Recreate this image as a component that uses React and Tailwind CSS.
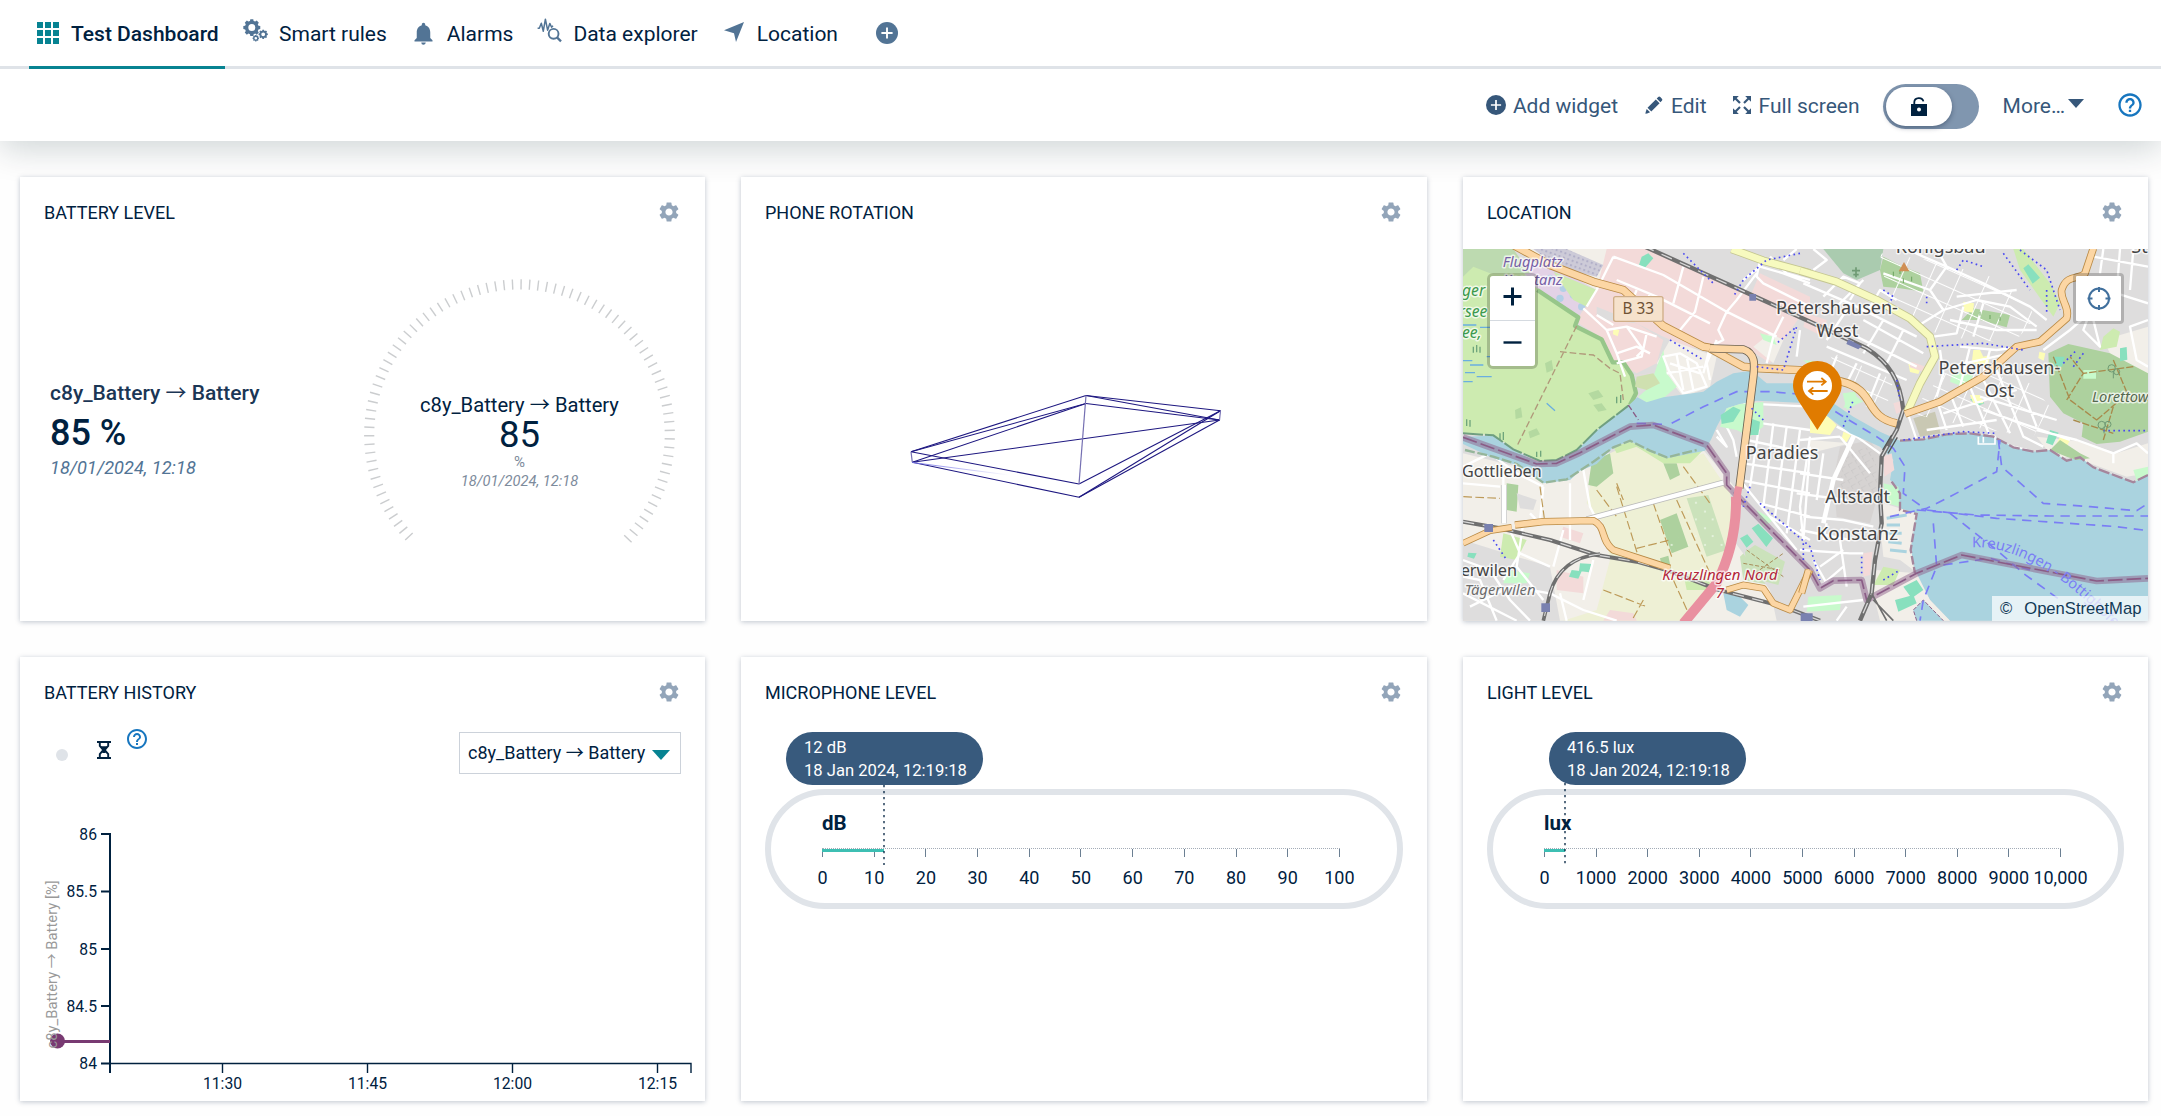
import React from 'react';
import { MdSettings, MdNotifications, MdHelpOutline } from 'react-icons/md';

const ARROW_FONT = '"Noto Sans CJK JP", "Noto Sans CJK SC", sans-serif';

const polar = (cx, cy, r, deg) => {
  const a = (deg * Math.PI) / 180;
  return [cx + r * Math.sin(a), cy - r * Math.cos(a)];
};

function gearPath(cx, cy, outer, inner, hole, teeth) {
  const step = 360 / teeth;
  const pts = [];
  for (let i = 0; i < teeth; i++) {
    const a = i * step;
    pts.push(polar(cx, cy, inner, a - step * 0.34));
    pts.push(polar(cx, cy, outer, a - step * 0.22));
    pts.push(polar(cx, cy, outer, a + step * 0.22));
    pts.push(polar(cx, cy, inner, a + step * 0.34));
  }
  const body = 'M' + pts.map((p) => p[0].toFixed(2) + ' ' + p[1].toFixed(2)).join('L') + 'Z';
  return `${body}M${cx - hole} ${cy}a${hole} ${hole} 0 1 0 ${hole * 2} 0a${hole} ${hole} 0 1 0 ${-hole * 2} 0Z`;
}

const Arrow = () => <span className="font-normal" style={{ fontFamily: ARROW_FONT, lineHeight: 0 }}>→</span>;

const GridIcon = () => (
  <svg width="22" height="22" viewBox="0 0 22 22" fill="#078392">
    {[0, 8, 16].map((y) => [0, 8, 16].map((x) => <rect key={`${x}-${y}`} x={x} y={y} width="6" height="6" />))}
  </svg>
);

const CogsIcon = () => (
  <svg width="25" height="23" viewBox="0 0 25 23" fill="#527495" fillRule="evenodd">
    <path d={gearPath(8.8, 8.6, 8.6, 6.9, 3.5, 8)} />
    <path d={gearPath(20.2, 15.3, 4.7, 3.8, 1.9, 8)} />
    <path d={gearPath(12.8, 19.2, 3.3, 2.7, 1.3, 8)} />
  </svg>
);

const ExplorerIcon = () => (
  <svg width="25" height="25" viewBox="0 0 25 25" fill="none" stroke="#527495">
    <path d="M.6 10.2H2.3L4.3 5.2L6.3 13.2L8.4 1.2L10.6 12.2L12.8 5.4L14.6 9.2L16 7.8" strokeWidth="1.5" strokeLinejoin="round" />
    <circle cx="16.6" cy="15.8" r="4.9" strokeWidth="1.9" />
    <path d="M20 19.4L24 23.4" strokeWidth="2.3" />
  </svg>
);

const PlusCircle = ({ size, color }) => (
  <svg width={size} height={size} viewBox="0 0 22 22">
    <circle cx="11" cy="11" r="11" fill={color} />
    <path d="M11 5.4V16.6M5.4 11H16.6" stroke="#fff" strokeWidth="1.9" />
  </svg>
);

const PencilIcon = () => (
  <svg width="18" height="18" viewBox="0 0 18 18" fill="#36577a">
    <path d="M13.2 1.1a1.5 1.5 0 0 1 2.1 0l1.6 1.6a1.5 1.5 0 0 1 0 2.1l-1.5 1.5-3.7-3.7zM10.8 3.4l3.8 3.8-8.3 8.3-3.8-3.8zM1.7 12.9l3.4 3.4-3 1.1L.4 17.7l.3-1.8z" />
  </svg>
);

const ExpandIcon = () => (
  <svg width="18" height="18" viewBox="0 0 18 18" fill="#36577a" stroke="#36577a">
    {[0, 90, 180, 270].map((r) => (
      <g key={r} transform={`rotate(${r} 9 9)`}>
        <path d="M0 0H5.8L0 5.8Z" stroke="none" />
        <path d="M2 2L7 7" strokeWidth="2.2" />
      </g>
    ))}
  </svg>
);

const UnlockIcon = () => (
  <svg width="16" height="19" viewBox="0 0 16 19">
    <path d="M3.3 8V5A4.6 4.2 0 0 1 12.4 4.4" fill="none" stroke="#00213f" strokeWidth="1.8" />
    <path fillRule="evenodd" fill="#00213f" d="M0 7H16V19H0ZM6 12.6a2 2 0 1 0 4 0a2 2 0 1 0-4 0Z" />
  </svg>
);

const Hourglass = () => (
  <svg width="14" height="18" viewBox="0 0 14 18" fill="none" stroke="#00213f">
    <path d="M0 1H14M0 17H14" strokeWidth="2" />
    <path d="M2.8 1.5V4.8L6.2 9 2.8 13.2V16.5M11.2 1.5V4.8L7.8 9 11.2 13.2V16.5" strokeWidth="1.9" />
    <path d="M3.5 5.2H10.5L7.6 9.2 9 12H5L6.4 9.2Z" fill="#00213f" stroke="none" />
  </svg>
);

function Tab({ icon, label, className = '', active }) {
  return (
    <div
      className={
        (active ? 'font-medium border-[#078392] ' : 'border-[#dfe3e8] ') +
        'flex h-[69px] items-center border-b-[3px] text-[21px] leading-none text-[#00213f] ' +
        className
      }
    >
      {icon}
      <span className="mt-[2px] whitespace-nowrap">{label}</span>
    </div>
  );
}

function Card({ title, children }) {
  return (
    <section className="relative flex h-[444px] flex-col bg-white shadow-[0_1px_5px_rgba(10,35,70,0.26)]">
      <header className="flex h-[72px] shrink-0 items-center justify-between pr-[24px] pl-[24px]">
        <h2 className="text-[18px] leading-none text-[#00213f]">{title}</h2>
        <MdSettings size={24} color="#93a5b9" className="-mt-[3px]" />
      </header>
      <div className="relative flex flex-1">{children}</div>
    </section>
  );
}

function BatteryLevel() {
  const ticks = [];
  for (let i = -41; i <= 41; i++) {
    const a = i * 3.25 + 0.6;
    ticks.push([...polar(499.5, 185.7, 155.4, a), ...polar(499.5, 185.7, 145.2, a)]);
  }
  return (
    <>
      <div className="mt-[132px] flex w-[300px] flex-col pl-[30px]">
        <div className="text-[21px] leading-[24px] font-medium whitespace-nowrap text-[#1b3655]">c8y_Battery <Arrow /> Battery</div>
        <div className="mt-[7px] text-[36px] leading-[42px] font-medium text-[#00213f]">85 %</div>
        <div className="mt-[2px] text-[18.2px] leading-[24px] text-[#527495] italic">18/01/2024, 12:18</div>
      </div>
      <svg className="absolute inset-0" width="685" height="372">
        {ticks.map((t, i) => (
          <line key={i} x1={t[0]} y1={t[1]} x2={t[2]} y2={t[3]} stroke="#cbcdcf" strokeWidth="1.4" />
        ))}
        <g textAnchor="middle" fill="#00213f">
          <text x="499.5" y="163" fontSize="20.2">c8y_Battery <tspan fontFamily={ARROW_FONT}>→</tspan> Battery</text>
          <text x="499.5" y="197.5" fontSize="36.5">85</text>
          <text x="499.5" y="217.5" fontSize="15" fill="#7d8b9c">%</text>
          <text x="499.5" y="237" fontSize="14.7" fill="#7d8b9c" fontStyle="italic">18/01/2024, 12:18</text>
        </g>
      </svg>
    </>
  );
}

function PhoneRotation() {
  const P = {
    a: [345, 146.5], a2: [345, 154.5], b: [479.5, 161.7], b2: [478.5, 171],
    c: [170, 202.7], c2: [171.3, 213.3], d: [338, 235], d2: [338, 248.3],
  };
  const edges = ['a-b', 'a-c', 'a2-c', 'a2-c2', 'a2-b2', 'a-b2', 'c-d', 'c2-d2', 'd-b', 'd2-b', 'd2-b2', 'c2-b2'];
  const soft = ['a-d', 'b-b2', 'c-c2'];
  const line = (e, stroke, w = 1) => {
    const [s, t] = e.split('-');
    return <line key={e} x1={P[s][0]} y1={P[s][1]} x2={P[t][0]} y2={P[t][1]} stroke={stroke} strokeWidth={w} />;
  };
  return (
    <svg width="685" height="372">
      <defs>
        <linearGradient id="fade" x1="0" x2="1">
          <stop offset="0" stopColor="#7a78e8" />
          <stop offset="1" stopColor="#7a78e8" stopOpacity="0" />
        </linearGradient>
      </defs>
      {edges.map((e) => line(e, '#1d1780', 1.1))}
      {soft.map((e) => line(e, '#7570b2', 1.2))}
      <path d="M171.3 213.5L268 226" stroke="url(#fade)" fill="none" />
    </svg>
  );
}

/* ---------- Map ---------- */
const COL = {
  water: '#aad3df', land: '#f2efe9', res: '#dedddd', ind: '#f3dad9', grass: '#cdebb0',
  field: '#eef0d5', forest: '#add19e', park: '#c8facc', pitch: '#88e0be', yellow: '#fdfdb6',
  rail: '#6f6f6f', admin: '#8d618b',
};

const Fill = ({ d, c }) => <path d={d} fill={c} />;

const Road = ({ d, w = 20, c = '#fcd6a4', e = '#b98a45' }) => (
  <g fill="none" strokeLinejoin="round">
    <path d={d} stroke={e} strokeWidth={w + 5} />
    <path d={d} stroke={c} strokeWidth={w} />
  </g>
);

const Rail = ({ d, w = 10 }) => (
  <g fill="none" strokeLinejoin="round">
    <path d={d} stroke={COL.rail} strokeWidth={w} />
    <path d={d} stroke="#d9d9d9" strokeWidth={w * 0.3} strokeDasharray="34 26" />
  </g>
);

const Label = ({ x, y, s = 50, c = '#444', children, ...rest }) => (
  <text x={x} y={y} fontSize={s} fill={c} stroke="#fff" strokeOpacity="0.7" strokeWidth="9" strokeLinejoin="round" paintOrder="stroke" {...rest}>
    {children}
  </text>
);

const MINOR_LEFT =
  'M490 50L440 150 410 200 M490 50L640 105 830 215 980 290 M500 120L620 170 780 250 M700 80L670 190 M760 110L735 215 690 270 M830 215L805 270 820 300 780 320 760 400 M600 160L580 215 M560 150L540 200 M920 100L860 180 830 215 M880 120L930 80 1000 100 1080 130 M400 205L470 270 530 260 620 290 M470 270L500 340 525 410 M530 260L580 330 560 350 M500 340L560 320 600 340 M440 225L490 255 M590 280L575 350 500 370 M640 350L690 340 740 370 770 440 700 460 660 400Z M660 370L750 400 M680 345L700 450 M710 350L730 450 M650 400L760 380 M930 60L920 110 940 130 1080 200 M960 50L1010 100 1080 120 M1000 60L1040 27 M780 420L770 370 800 300 M1000 230L970 290 950 370 M1050 270L1040 350';
const MINOR_PARADIES =
  'M880 490L1080 500 M900 545L1080 570 M890 600L1080 640 M880 670L1080 700 M870 720L1080 760 M930 540L900 740 M970 550L940 800 M1010 560L975 830 M1050 570L1010 880 M870 720L1040 930 M930 790L1080 830 M960 830L1080 900 M800 570L830 620 800 590 M830 560L850 600 860 650 M1080 590L1050 800 1060 900';
const MINOR_SW =
  'M39 680L120 640 200 700 280 740 M160 700V850 M240 820L270 850 M400 690L420 800 440 840 M280 740L270 840 M360 730L360 900 M39 960L120 990 180 1080 240 1142 M39 1010L90 1020 140 1142 M180 870L210 940 300 980 M210 940L160 1020 M60 1100L180 1040 300 1060 400 1110 500 1142 M330 1060L350 1142 M430 960L400 1080 M39 730L150 740 M340 870L310 980 M220 850L200 980 280 1080 M39 1060L200 1142';
const MINOR_RIGHT =
  'M1060 130L1200 190 1320 250 1400 290 M1090 90L1130 60 1090 27 M1120 170L1180 110 1230 130 1200 180 M1160 200L1240 120 M1250 220L1290 150 1340 180 M1240 240L1330 290 1420 340 M1200 280L1400 380 M1190 210L1130 300 M1300 240L1240 340 M1360 270L1310 370 M1130 320L1370 420 M1160 350L1140 400 M1220 370L1190 430 M1290 400L1250 500 M1300 100L1440 150 1490 80 1420 50 1370 27 M1440 150L1480 210 1400 260 M1490 80L1600 130 1740 200 1790 240 M1490 80L1460 27 M1480 210L1580 180 1680 200 1760 260 M1520 170L1700 150 M1540 200L1520 280 1450 290 M1500 240L1640 270 1760 270 M1600 190L1570 290 M1470 330L1480 400 1460 470 M1530 320L1640 330 1720 320 M1560 320L1530 440 M1620 330L1600 400 M1500 380L1680 340 M1370 510L1400 600 M1460 480L1490 570 M1500 460L1540 560 M1560 440L1620 590 M1430 570L1640 540 M1480 520L1700 450 M1600 420L1680 580 M1640 390L1720 590 1780 620 M1690 380L1760 560 M1560 590L1730 630 M1590 470L1820 540 M1600 510L1860 600 M1780 330L1860 270 1940 200 1980 120 M1960 110L1930 190 1900 270 1950 320 1930 240 1960 210 M2010 27L2000 160 2094 190 M2050 27L2040 150 M1930 50L2094 80 M1960 27L1950 100 M2094 240L2040 260 2060 360 2094 380 M1760 570L1880 600 1990 640 2060 610 2094 640 M1990 640L1990 670';
const MINOR_CITY =
  'M1050 700L1180 720 M1040 760L1190 780 M1080 620L1060 900 M1120 640L1100 780 M1170 590L1260 700 M1160 560L1220 590 1290 640 M1050 600L1170 590 M1060 830L1180 840 1270 860 M1050 930L1200 940 1240 940 M1090 960L1130 1030 M1170 900L1190 1040 M1130 850L1120 900 M1050 870L1200 900 M1060 1100L1240 1080 M1180 930L1110 980 M1190 1100L1160 1142 M1110 1040L1180 980';
const DOTS =
  'M1050 40L950 60 880 120 850 170 M920 380L1000 390 1040 260 980 310 M700 40L790 130 M660 300L760 360 M1660 40L1740 150 M1710 30L1790 90 1830 210 M1790 150L1790 220 M1360 600L1540 575 1640 580 M1300 150L1330 170 1310 200 M1430 320L1600 310 1720 330 M1430 190V160 M1520 90L1540 60 1600 80 M1900 340L1870 380 M1960 572H2094 M1180 560L1210 480 M1235 950V1010 M1300 1020L1350 990 M930 790L1080 920 1110 1020 M900 740L880 800 M940 540L900 500 M130 900L170 960 M1060 910V960 M1340 420L1350 480 M1840 370L1880 330';
const BORDER =
  'M39 592L260 672 320 670 390 638 540 560 610 555 770 615 830 700 830 735 1080 990 1110 1045 1150 1022 1235 1020 1250 1080 1400 1000 1535 945 1940 1023 2094 1015';

function MapCanvas() {
  return (
    <svg className="block h-[372px] w-full" viewBox="39 27 2055 1116" preserveAspectRatio="none" fontFamily="'Noto Sans', sans-serif">
      <defs>
        <pattern id="blocks" width="80" height="48" patternUnits="userSpaceOnUse" patternTransform="rotate(24)">
          <path d="M0 0H80M0 0V48" stroke="#fff" strokeWidth="6" fill="none" />
        </pattern>
        <pattern id="oldtown" width="24" height="20" patternUnits="userSpaceOnUse" patternTransform="rotate(-30)">
          <path d="M0 0H16M0 0V12" stroke="#c5c3c3" strokeWidth="3" fill="none" />
        </pattern>
        <pattern id="orchard" width="50" height="50" patternUnits="userSpaceOnUse">
          <circle cx="15" cy="15" r="3" fill="#eaf6e4" />
          <circle cx="38" cy="38" r="3" fill="#eaf6e4" />
        </pattern>
        <pattern id="hatch" width="14" height="14" patternUnits="userSpaceOnUse" patternTransform="rotate(20)">
          <rect width="14" height="14" fill="#cdcbd8" />
          <rect width="6" height="6" fill="#b1afc8" />
        </pattern>
        <path id="ferryname" d="M1566 922C1640 918 1730 950 1810 1005S1950 1120 2000 1170" />
      </defs>
      <rect x="39" y="27" width="2055" height="1116" fill={COL.res} />

      {/* open land and industry */}
      <Fill c={COL.land} d="M39 640L280 700 470 640 760 630 870 760 1000 980 1080 1142H39Z" />
      <Fill c={COL.land} d="M230 27H520L440 150 350 100Z" />
      <Fill c={COL.ind} d="M470 27H600L900 160 1050 230 1000 300 960 370 900 330 760 320 640 330 600 400 540 410 490 365 455 295 380 240 440 150Z" />
      <Fill c={COL.res} d="M440 200L540 240 640 290 760 340 780 430 700 470 600 400 530 410 480 340 440 280Z" />
      <Fill c={COL.ind} d="M410 210L470 240 560 250 640 300 620 370 560 400 500 370 450 290 385 250Z" />
      <Fill c={COL.land} d="M660 300L800 350 780 440 700 470 620 370Z" />
      <Fill c={COL.ind} d="M930 100L1080 170 1080 240 900 170Z" />
      <Fill c={COL.land} d="M960 280L1000 300 970 370 910 320Z" />
      <Fill c="url(#hatch)" d="M250 27H350L460 75 440 110 330 85Z" />
      <Fill c="#e3d2e6" d="M200 60L330 90 420 140 390 225 260 150Z" />
      {[[300, 115], [340, 145], [370, 165], [395, 200], [330, 175]].map((p, i) => (
        <circle key={i} cx={p[0]} cy={p[1]} r="11" fill="#b3cfe6" />
      ))}
      <Fill c={COL.grass} d="M310 95L440 150 410 200 370 180Z" />

      {/* wetland */}
      <Fill c={COL.grass} d="M39 27H180L240 130 385 230 375 258 455 298 488 367 520 367 545 405 560 460 540 497 500 530 440 570 380 630 310 665 260 660 190 625 130 585 39 580Z" />
      <Fill c="#bddab0" d="M39 27H190L240 100 120 100 70 80 39 110Z" />
      <path d="M262 150L385 232 375 258 455 298 488 367 520 367 545 405 558 460 540 495" fill="none" stroke="#97c68a" strokeWidth="13" strokeLinejoin="round" />
      <path d="M380 258L200 620 M330 335L430 345 480 385 510 400 520 480" fill="none" stroke="#b0987a" strokeWidth="4" strokeDasharray="20 9" />
      <path d="M39 255h40M90 262h30M39 362h28M60 375h40M45 398h30M80 410h45M40 425h28M110 350h30M290 490l25 22" stroke="#6aaee0" strokeWidth="4" />
      <Fill c="#b4d9a0" d="M415 460l30-10 15 20-30 10zM430 495l25-5 15 20-25 5zM195 510l18-8 4 30-20 5zM235 575l25-10 10 18-30 12zM285 370l20-10 5 30-20 8z" />
      <path d="M70 320v18M80 315v22M90 320v18M60 540v20M50 538v20M150 580v22M160 576v24M260 635v16M272 632v18M500 470v20M512 465v24" stroke="#6fa57c" strokeWidth="4" />

      {/* parks, woods, pitches */}
      <Fill c={COL.park} d="M640 330L650 400 680 440 640 475 590 488 565 470 600 440 620 380Z" />
      <Fill c="#cfe0b0" d="M560 410L610 400 630 430 590 450 555 440Z" />
      <Fill c="#aacbaf" d="M1120 27H1300L1290 90 1220 120 1180 100Z" />
      <Fill c={COL.forest} d="M1300 50L1360 80 1410 100 1420 155 1350 145 1300 140 1290 90Z" />
      <Fill c={COL.grass} d="M1690 27H1720L1800 130 1830 190 1810 230 1760 160 1710 90Z" />
      <Fill c={COL.forest} d="M1570 205L1680 225 1670 262 1590 240 1535 240Z" />
      <Fill c={COL.land} d="M1960 300L2094 260V430L1990 360Z" />
      <Fill c={COL.land} d="M1760 590L1900 605 2000 640 2094 610V700L2030 710 1920 670 1870 650 1810 655Z" />
      <Fill c={COL.grass} d="M1960 290L1990 265 2010 275 2000 320 1950 330Z" />
      <Fill c={COL.forest} d="M1795 340L1855 312 1980 340 2094 400V575L2010 605 1940 612 1895 590 1900 550 1840 520 1800 470Z" />
      <Fill c="#c9c8b3" d="M1390 535L1455 515 1472 580 1410 590Z" />
      <Fill c={COL.pitch} d="M575 50l20-10 15 15-25 28-18-8zM1720 85l15-12 35 40-22 18zM1810 350h34l-8 30h-22zM1560 478l25-8 18 20-20 8zM1800 570l26 8-18 38-20-8zM2010 325l20-4 2 38-22 5z" />
      <Fill c={COL.park} d="M1900 390h38v26h-38zM1200 455l40 30-60 20zM1510 395l60 10-20 40-50-20zM1060 360l40 5-10 20zM930 280l40 10 10 25-40-15z" />
      <Fill c={COL.yellow} d="M1540 185l32 5-3 28-28-4zM1570 330l20 0 10 20 20-5-5 30-50-5zM1375 370l40 10-10 22-25-6zM1830 590l30 10-20 40-25-20zM960 480l100 15 0 50-60-5-40-30zM1050 500l60 5 50 50-20 30-90-10zM1768 335l18 5-5 22-16-8zM490 265l18 6-5 18-14-6zM1240 460l14-6 8 16-14 8zM1570 490l30 0-10 -25-30 0zM1180 575l24 8-14 24-16-8z" />
      <Fill c={COL.ind} d="M1070 220L1130 240 1120 290 1060 260ZM1330 490l25-8 4 30-20 10zM1385 365l50 18-12 14-45-16z" />

      {/* fields south of the river */}
      <Fill c={COL.field} d="M430 690L480 640 540 612 620 650 700 665 760 640 800 700 850 770 845 880 800 1030 700 1142H340L440 1110 480 960 460 850 410 790Z" />
      <Fill c={COL.forest} d="M425 665L480 640 490 700 440 740 415 735ZM170 730L205 735 200 815 170 810ZM630 840L680 820 715 920 665 940ZM630 955l25-8 8 40-28-12zM640 670l40 0 10 35-30 15z" />
      <Fill c="#cbe2bb" d="M710 775L775 765 830 930 770 950ZM870 950L900 920 1010 960 990 1040 880 1020Z" />
      <Fill c="url(#orchard)" d="M630 840L715 920 710 775 775 765 830 930 660 940Z" />
      <Fill c={COL.grass} d="M490 620L540 605 640 640 760 630 720 670 640 670 560 620 500 640Z" />
      <Fill c={COL.res} d="M39 900L200 950 300 980 330 1142H39ZM200 760l60 20-10 30-40-5zM840 740L1080 990V1142H980L960 1050 850 900Z" />
      <Fill c={COL.res} d="M880 480L1080 480 1080 1100 870 760Z" />
      <Fill c={COL.ind} d="M340 860L400 880 390 910 330 890ZM320 990L400 1010 400 1060 320 1050ZM480 1110l70 10 10 22H460Z" />
      <Fill c={COL.park} d="M170 990L240 1000 230 1030 160 1030ZM1075 1070L1175 1065 1170 1110 1070 1115ZM920 810l50 30-30 20z" />
      <Fill c={COL.grass} d="M160 880L230 900 200 960 150 950ZM700 1000L770 1010 790 1050 710 1050Z" />
      <Fill c={COL.pitch} d="M390 970l35 2-8 25-30-4zM365 990l30 4-10 22-28-6zM870 895l22-12 18 22-20 18zM905 865l20-14 44 44-20 26zM55 938l25 2-8 16-20-6z" />
      <Fill c={COL.water} d="M820 1060L870 1070 895 1095 870 1130 830 1110Z" />
      <Fill c="#cbe2bb" d="M885 935L915 915 1005 965 985 1035 890 1010Z" />
      <Fill c={COL.land} d="M1080 600L1200 610 1080 640Z" />
      <Fill c="#d6d3d2" d="M1170 620L1260 600 1290 650 1285 760 1260 850 1160 830 1150 720Z" />
      <Fill c="url(#oldtown)" d="M1180 640L1260 620 1285 700 1275 760 1170 740Z" />

      {/* minor roads */}
      <Fill c="url(#blocks)" d="M1290 40L1440 60 1660 120 1760 230 1690 310 1480 290 1320 210ZM1480 400L1600 400 1740 430 1800 500 1750 590 1560 560 1380 520ZM1130 330L1330 420 1300 540 1190 430Z" />
      <g fill="none" stroke="#fff" strokeWidth="7" strokeLinejoin="round">
        <path d={MINOR_LEFT} />
        <path d={MINOR_PARADIES} />
        <path d={MINOR_SW} />
        <path d={MINOR_RIGHT} />
        <path d={MINOR_CITY} />
      </g>
      <path d="M1215 580L1150 720 1120 850" fill="none" stroke="#fff" strokeWidth="14" />
      <path d="M440 750L500 830M500 730L520 780M270 740L285 850M500 740L565 950M610 790L665 950M680 780L780 1000M560 925L660 900M670 1020L720 1130M580 1080L545 1142M40 770L150 775M460 1050L590 1100M700 680L780 790" fill="none" stroke="#bd9a58" strokeWidth="3.5" strokeDasharray="26 10" />
      <path d="M890 930L1000 1010M900 1010L1000 940M880 970L990 990" fill="none" stroke="#a78d5a" strokeWidth="3" strokeDasharray="12 6" />
      <path d="M1810 350L1860 480 1940 540M1850 480L1900 400 2050 380M1900 400L1860 350M1940 540L2010 480 2094 480M1990 500L1960 600M1870 540L1990 580M1990 360L2040 480" fill="none" stroke="#a88a4c" strokeWidth="4" strokeDasharray="22 6" />
      <path d="M1330 95v14M1360 115v14M1385 110v14M1350 90v12M1590 215v12M1620 225v12M1650 230v12" stroke="#6ba45e" strokeWidth="3" />

      {/* water */}
      <Fill
        c={COL.water}
        d="M39 590L130 587 190 630 260 665 320 662 380 632 440 572 535 497 562 472 590 487 640 472 690 465 760 455 800 425 850 400 905 392 950 430 1080 430 1150 490 1210 530 1290 575 1350 602 1420 598 1490 583 1560 580 1630 590 1690 622 1750 635 1800 630 1850 662 1890 652 1930 682 2010 712 2050 727 2094 705V1142H1500L1440 1080 1400 1010 1382 930 1400 822 1350 815 1340 740 1320 720 1330 660 1290 620 1200 580 1080 490 920 482 870 492 830 505 800 560 785 595 765 632 650 655 600 635 540 602 490 622 440 672 390 692 360 720 280 730 200 675 130 655 39 612Z"
      />
      <path d="M45 630L130 650 200 672 280 728 350 718 430 665 490 622 540 602 600 632 650 652 740 630" fill="none" stroke="#95b59a" strokeWidth="7" strokeDasharray="30 8" />
      <path d="M39 580L130 586 190 628 270 663 320 660 380 630 440 570 535 497" fill="none" stroke="#709f80" strokeWidth="6" strokeDasharray="60 6" />
      <Fill c={COL.park} d="M830 505L870 492 940 486 940 560 900 590 860 570 810 560Z" />
      <Fill c={COL.pitch} d="M812 525L850 500 872 510 850 545 815 552ZM900 535L930 545 925 585 900 585Z" />
      <Fill c={COL.park} d="M1300 730L1345 740 1350 800 1310 790ZM1178 460L1215 455 1225 490 1190 510ZM2050 690L2094 680V705L2060 722Z" />
      <Fill c={COL.ind} d="M1300 650l25-10 8 50-30 20z" />
      <Fill c={COL.land} d="M1300 790L1400 820 1382 900 1390 990 1350 960 1300 950 1290 850Z" />
      <path d="M1310 855h40M1305 880h50M1315 905l40 5M1320 930l50 5M1310 835l60-10" stroke={COL.water} strokeWidth="9" />
      <path d="M1585 590v22h50v-25M1600 590v18" fill="none" stroke="#fff" strokeWidth="5" />
      <Fill c={COL.land} d="M1280 990L1400 1000 1440 1080 1500 1142H1290L1270 1060Z" />
      <Fill c={COL.pitch} d="M1360 1040L1400 1020 1420 1050 1385 1075ZM1335 1080L1390 1065 1400 1090 1345 1115Z" />
      <path d="M1400 1142L1390 1110 1420 1080 1480 1142" fill={COL.water} stroke={COL.admin} strokeWidth="3" strokeDasharray="12 5" />
      <Fill c={COL.ind} d="M1240 940l28-5-8 70-20 5z" />
      <Fill c={COL.grass} d="M1300 980l50 10-20 45-60 0z" />
      <Fill c={COL.forest} d="M1800 630L1830 600 1890 640 1920 655 1880 660 1850 650Z" />
      <path d="M1350 602L1420 598 1490 583 1560 580 1630 590 1690 622 1750 635 1800 630 1850 662 1890 652 1930 682 2010 712 2050 727 2094 705" fill="none" stroke="#a5869c" strokeWidth="7" strokeDasharray="34 8" />
      <path d="M1325 725L1350 760 1350 810 1400 822 1382 930 1395 1000" fill="none" stroke="#a5869c" strokeWidth="7" strokeDasharray="26 8" />

      {/* ferries */}
      <g fill="none" stroke="#7a7df5" strokeWidth="5" strokeDasharray="28 20">
        <path d="M665 550L760 500 860 455 960 455 1080 465 1180 530 1280 590 1330 625 1365 680 1360 760 1430 810" />
        <path d="M1320 830L1430 805 1500 770 1640 695 1650 600" />
        <path d="M1645 600L1655 680 1780 790 1920 800 2060 812 2094 790" />
        <path d="M1400 810L1580 825 1800 828 2094 828" />
        <path d="M1430 810L1640 835 2000 860 2094 872" />
        <path d="M1500 820L1640 930 1720 1000 1830 1080" />
        <path d="M1450 850L1460 980 1420 1080 1410 1142" />
        <path d="M1480 975L1620 955 1740 990" />
        <path d="M560 550L640 553" />
      </g>

      {/* borders */}
      <g fill="none" strokeLinejoin="round">
        <path d={BORDER} stroke={COL.admin} strokeOpacity="0.5" strokeWidth="20" />
        <path d={BORDER} stroke="#8a5c86" strokeWidth="5" strokeDasharray="44 12" />
        <path d="M535 495L565 540" stroke="#8a5c86" strokeWidth="4" strokeDasharray="18 8" />
      </g>

      {/* railways */}
      <Rail w={13} d="M580 18L905 165 1080 245 1250 325C1320 370 1350 420 1360 510L1340 570 1295 650 1290 760 1295 850 1275 960 1265 1060 1230 1142" />
      <path d="M1325 585L1298 630M1342 592L1314 640" stroke="#555" strokeWidth="4" />
      <Rail w={12} d="M39 845L150 865 300 900 440 945 560 965 650 990 800 1048 1000 1100 1110 1142" />
      <Rail w={11} d="M450 942C370 950 320 990 300 1060L280 1142" />
      <path d="M1265 1060L1310 1142M1270 1080L1330 1142" fill="none" stroke={COL.rail} strokeWidth="5" />

      {/* main roads */}
      <Road d="M845 27L940 62 1080 100" w={20} c="#f7fabf" e="#c4c690" />
      <Road d="M1050 92L1160 125 1280 180 1380 235 1440 290 1455 350 1410 430 1372 515" w={20} c="#f7fabf" e="#c4c690" />
      <Road d="M410 838L820 728" w={13} c="#fff" e="#bbb" />
      <Road d="M162 735V850" w={13} c="#fff" e="#ccc" />
      <Road d="M195 855L280 845 430 842C470 860 450 900 490 930L660 985" w={17} />
      <Road d="M39 910L120 872 185 862" w={15} />
      <Road d="M190 15L300 75 430 125 520 150 640 258 760 320 790 325" w={20} />
      <Road d="M780 325L880 380 930 385 1080 392 1175 425C1280 450 1240 530 1340 550" w={20} />
      <Road d="M1365 522L1470 485 1600 410 1700 320 1770 305 1850 235C1860 200 1830 180 1835 150C1850 100 1890 120 1905 100L1930 25" w={18} />
      <Road d="M780 325L880 328C915 340 915 370 910 410L868 745" w={20} e="#6a6152" />
      <path d="M858 770C860 860 840 950 800 1030L700 1150" fill="none" stroke="#e990a0" strokeWidth="30" />
      <path d="M866 740L858 790" fill="none" stroke="#e990a0" strokeWidth="22" />
      <Road d="M830 1050L880 1035 940 1045 970 1090 1020 1110 1080 990" w={16} />
      <Road d="M1075 990L1055 1060" w={16} />

      <path d={DOTS} fill="none" stroke="#4a4af0" strokeWidth="5" strokeDasharray="5 10" />

      {/* stations */}
      <g fill="#7981b0">
        <path d="M103 852h26v24h-26zM274 1090h26v26h-26zM898 162h20v20h-20zM1052 1120h36v23h-36zM1195 298l40 20-10 10-36-16z" />
      </g>
      <path d="M1362 66L1378 94H1346Z" fill="#d08f55" />
      <g fill="none" stroke="#6f9a74" strokeWidth="3">
        <circle cx="1985" cy="385" r="11" /><circle cx="2000" cy="395" r="9" /><path d="M1990 395v20" />
        <circle cx="1955" cy="555" r="11" /><circle cx="1974" cy="553" r="9" /><path d="M1962 560v20" />
        <path d="M1218 82v30M1206 92h24M1210 104h16" strokeWidth="5" />
      </g>

      {/* names */}
      <g textAnchor="middle">
        <Label x="1161" y="222" s="54">Petershausen-</Label>
        <Label x="1162" y="290" s="54">West</Label>
        <Label x="1648" y="402" s="54">Petershausen-</Label>
        <Label x="1648" y="471" s="54">Ost</Label>
        <Label x="996" y="656" s="54">Paradies</Label>
        <Label x="1223" y="790" s="53.5">Altstadt</Label>
        <Label x="1222" y="900" s="56.5">Konstanz</Label>
        <Label x="1472" y="38" s="54">Königsbau</Label>
        <Label x="248" y="82" s="44" c="#7660a5" fontStyle="italic">Flugplatz</Label>
        <Label x="248" y="134" s="44" c="#7660a5" fontStyle="italic">Konstanz</Label>
        <Label x="810" y="1021" s="45" c="#b3263a" fontStyle="italic">Kreuzlingen Nord</Label>
        <Label x="810" y="1074" s="45" c="#b3263a" fontStyle="italic">7</Label>
      </g>
      <Label x="2044" y="38" s="54">St</Label>
      <Label x="36" y="711" s="48.5">Gottlieben</Label>
      <Label x="32" y="1007" s="49">erwilen</Label>
      <Label x="44" y="1065" s="44.5" c="#6c6c6c" fontStyle="italic">Tägerwilen</Label>
      <Label x="1926" y="485" s="44" c="#55684f" fontStyle="italic">Lorettow</Label>
      <g>
        <Label x="36" y="167" s="47" c="#3c9a4d" fontStyle="italic">ger</Label>
        <Label x="26" y="231" s="47" c="#3c9a4d" fontStyle="italic">rsee</Label>
        <Label x="36" y="294" s="47" c="#3c9a4d" fontStyle="italic">ee,</Label>
      </g>
      <text fontSize="44" fill="#7a7df5"><textPath href="#ferryname">Kreuzlingen - Bottighofen</textPath></text>
      <rect x="491" y="170" width="148" height="74" rx="6" fill="#f6e2cc" stroke="#cfae88" strokeWidth="4" />
      <text x="565" y="223" fontSize="46" fill="#6f5234" textAnchor="middle">B 33</text>

      {/* device marker */}
      <path d="M1102 570L1048 487C1038 470 1029 455 1029 436A73 73 0 0 1 1175 436C1175 455 1166 470 1156 487Z" fill="#e07b00" />
      <circle cx="1102" cy="437" r="44" fill="#fff" />
      <path d="M1071 425H1126M1114 414L1127 425 1114 436M1133 453H1076M1090 442L1077 453 1090 464" fill="none" stroke="#e07b00" strokeWidth="5.5" />
    </svg>
  );
}

function LocationMap() {
  return (
    <div className="relative h-[372px] w-full overflow-hidden">
      <MapCanvas />
      <div className="absolute top-[24px] left-[24px] flex w-[51px] flex-col rounded-[6px] border-[3px] border-black/20 bg-clip-padding">
        <div className="flex h-[45px] items-center justify-center rounded-t-[3px] border-b border-[#d5dae0] bg-white pb-[4px]">
          <svg width="19" height="19"><path d="M9.5 .5V18.5M.5 9.5H18.5" stroke="#00213f" strokeWidth="3" /></svg>
        </div>
        <div className="flex h-[45px] items-center justify-center rounded-b-[3px] bg-white pb-[2px]">
          <svg width="19" height="19"><path d="M.5 9.5H18.5" stroke="#00213f" strokeWidth="2.4" /></svg>
        </div>
      </div>
      <div className="absolute top-[24px] right-[24px] flex h-[51px] w-[51px] items-center justify-center rounded-[4px] border-[3px] border-black/20 bg-white bg-clip-padding">
        <svg width="24" height="24" fill="none" stroke="#41709d" strokeWidth="2">
          <circle cx="12" cy="11.5" r="10" />
          <path d="M12 0V5M12 18V23M.5 11.5H5.5M18.5 11.5H23.5" />
        </svg>
      </div>
      <div
        className="absolute right-0 bottom-0 flex h-[25px] w-[156px] items-center gap-[12px] bg-white/70 pt-[2px] pl-[8px] text-[16.6px] leading-none text-[#123a56]"
        style={{ fontFamily: '"Liberation Sans", Arial, sans-serif' }}
      >
        <span>©</span>
        <span>OpenStreetMap</span>
      </div>
    </div>
  );
}

function BatteryHistory() {
  const yTicks = [['86', 105], ['85.5', 162.5], ['85', 220], ['84.5', 277], ['84', 334.5]];
  const xTicks = [['11:30', 202.5], ['11:45', 347.5], ['12:00', 492.5], ['12:15', 637.5]];
  return (
    <div className="flex w-full flex-col">
      <div className="flex h-[48px] items-start pl-[36px]">
        <span className="mt-[20px] h-[12px] w-[12px] rounded-full bg-[#dfe3e8]" />
        <span className="mt-[12px] ml-[29px]"><Hourglass /></span>
        <MdHelpOutline size={24} color="#1776bf" className="-mt-[2px] ml-[14px]" />
        <div className="mt-[3px] mr-[24px] ml-auto flex h-[42px] w-[222px] items-center border border-[#ccd2da] pl-[8px] text-[18px] leading-none text-[#00213f]">
          <span className="w-[178px] whitespace-nowrap">c8y_Battery <Arrow /> Battery</span>
          <svg width="18" height="10" className="mt-[4px] ml-[6px] shrink-0"><path d="M0 0H18L9 10Z" fill="#078392" /></svg>
        </div>
      </div>
      <svg width="685" height="324" viewBox="0 120 685 324" className="overflow-visible">
        <g transform="translate(0 72)">
          <g stroke="#00213f" strokeWidth="2" fill="none">
            <path d="M90 104V344" />
            {yTicks.map(([l, y]) => <path key={l} d={`M81 ${y}H90`} />)}
          </g>
          <path d="M90 334.5H671V344" fill="none" stroke="#00213f" strokeWidth="1.4" />
          {xTicks.map(([l, x]) => <path key={l} d={`M${x} 334V344`} stroke="#00213f" strokeWidth="1.4" />)}
          <g fill="#00213f" fontSize="15.7">
            {yTicks.map(([l, y]) => <text key={l} x="77" y={y + 5.5} textAnchor="end">{l}</text>)}
            {xTicks.map(([l, x]) => <text key={l} x={x} y="359.5" textAnchor="middle">{l}</text>)}
          </g>
          <path d="M37 312.5H90" stroke="#783a72" strokeWidth="3" />
          <circle cx="37.5" cy="312" r="7.5" fill="#783a72" />
          <text transform="translate(37 319.5) rotate(-90)" fontSize="14.8" fill="#999">c8y_Battery <tspan fontFamily={ARROW_FONT}>→</tspan> Battery [%]</text>
        </g>
      </svg>
    </div>
  );
}

function Linear({ unit, value, labels, pillLeft, markLeft, behind }) {
  return (
    <div className="flex w-full flex-col px-[24px]">
      <div className="relative z-10 mt-[3px] flex h-[53px] w-[197px] flex-col justify-center rounded-full bg-[#385a7d] pl-[18px] text-[16.6px] leading-[23px] whitespace-nowrap text-white" style={{ marginLeft: pillLeft }}>
        <span>{value}</span>
        <span>18 Jan 2024, 12:19:18</span>
      </div>
      <div className="relative mt-[4px] h-[120px] rounded-full border-[6px] border-[#e0e4e9] pt-[16px] pr-[57px] pl-[51px]">
        <div className="text-[20.5px] leading-[24px] font-bold text-[#00213f]">{unit}</div>
        <div className="mt-[13px] h-px border-t border-dotted border-[#a3acb7]" />
        <div className="flex justify-between">
          {labels.map((l) => (
            <div key={l} className="flex w-px flex-col items-center">
              <span className="h-[8px] w-px bg-[#6b7f92]" />
              <span className="mt-[10px] text-[18px] leading-[21px] whitespace-nowrap text-[#00213f]">{l}</span>
            </div>
          ))}
        </div>
        <div className="absolute top-[54px] left-[51px] h-[3px] bg-[#3dbfb3]" style={{ width: markLeft - 51 }} />
        <svg className="absolute overflow-visible" width="2" height="80" style={{ left: markLeft, top: -10 }}>
          <path d={behind ? 'M0 -8V80' : 'M0 0V80'} stroke="#00213f" strokeWidth="1.3" strokeDasharray="2.2 3.8" />
        </svg>
      </div>
    </div>
  );
}

export default function App() {
  return (
    <div className="h-[1116px] w-[2161px] overflow-hidden bg-[#fefefe]" style={{ fontFamily: 'Roboto, "Liberation Sans", sans-serif' }}>
      <div className="relative h-[141px] bg-white shadow-[0_8px_32px_rgba(0,35,45,0.19)]">
        <nav className="flex h-[69px] border-b-[3px] border-[#dfe3e8]">
          <Tab active className="ml-[29px] w-[196px] gap-[12px] pl-[8px]" icon={<GridIcon />} label="Test Dashboard" />
          <Tab className="ml-[18px] gap-[11px] [&_svg]:-mt-[6px]" icon={<CogsIcon />} label="Smart rules" />
          <Tab className="ml-[23px] gap-[10px]" icon={<MdNotifications size={27} color="#527495" />} label="Alarms" />
          <Tab className="ml-[24px] gap-[11px] [&_svg]:-mt-[6px]" icon={<ExplorerIcon />} label="Data explorer" />
          <Tab
            className="ml-[26px] gap-[13px]"
            icon={<svg width="20" height="20" viewBox="0 0 20 20" fill="#527495" className="-mt-[2px]"><path d="M20 0L12 20L10 11.2L0 8.3Z" /></svg>}
            label="Location"
          />
          <Tab className="ml-[38px]" icon={<PlusCircle size={22} color="#527495" />} label="" />
        </nav>
        <div className="flex h-[72px] items-center justify-end pr-[17px] text-[21px] leading-none whitespace-nowrap text-[#36577a]">
          <PlusCircle size={20} color="#36577a" />
          <span className="mt-[2px] ml-[7px]">Add widget</span>
          <span className="ml-[27px]"><PencilIcon /></span>
          <span className="mt-[2px] ml-[8px]">Edit</span>
          <span className="ml-[26px]"><ExpandIcon /></span>
          <span className="mt-[2px] ml-[8px]">Full screen</span>
          <div className="mt-[3px] ml-[23px] flex h-[45px] w-[96px] items-center rounded-full bg-[#8096af] pl-[3px]">
            <div className="flex h-[39px] w-[66px] items-center justify-center rounded-full bg-white shadow-[0_2px_5px_rgba(0,20,50,0.35)]">
              <UnlockIcon />
            </div>
          </div>
          <span className="mt-[2px] ml-[24px]">More…</span>
          <svg width="16" height="9" className="-mt-[4px] ml-[3px]"><path d="M0 0H16L8 9Z" fill="#36577a" /></svg>
          <MdHelpOutline size={28} color="#1776bf" className="-mt-[1px] ml-[32px]" />
        </div>
      </div>
      <main className="relative grid grid-cols-[685px_686px_685px] gap-x-[36px] gap-y-[36px] pt-[36px] pl-[20px]">
        <Card title="BATTERY LEVEL"><BatteryLevel /></Card>
        <Card title="PHONE ROTATION"><PhoneRotation /></Card>
        <Card title="LOCATION"><LocationMap /></Card>
        <Card title="BATTERY HISTORY"><BatteryHistory /></Card>
        <Card title="MICROPHONE LEVEL">
          <Linear unit="dB" value="12 dB" pillLeft={21} markLeft={113} labels={['0', '10', '20', '30', '40', '50', '60', '70', '80', '90', '100']} />
        </Card>
        <Card title="LIGHT LEVEL">
          <Linear unit="lux" value="416.5 lux" pillLeft={62} markLeft={71.5} behind labels={['0', '1000', '2000', '3000', '4000', '5000', '6000', '7000', '8000', '9000', '10,000']} />
        </Card>
      </main>
    </div>
  );
}
